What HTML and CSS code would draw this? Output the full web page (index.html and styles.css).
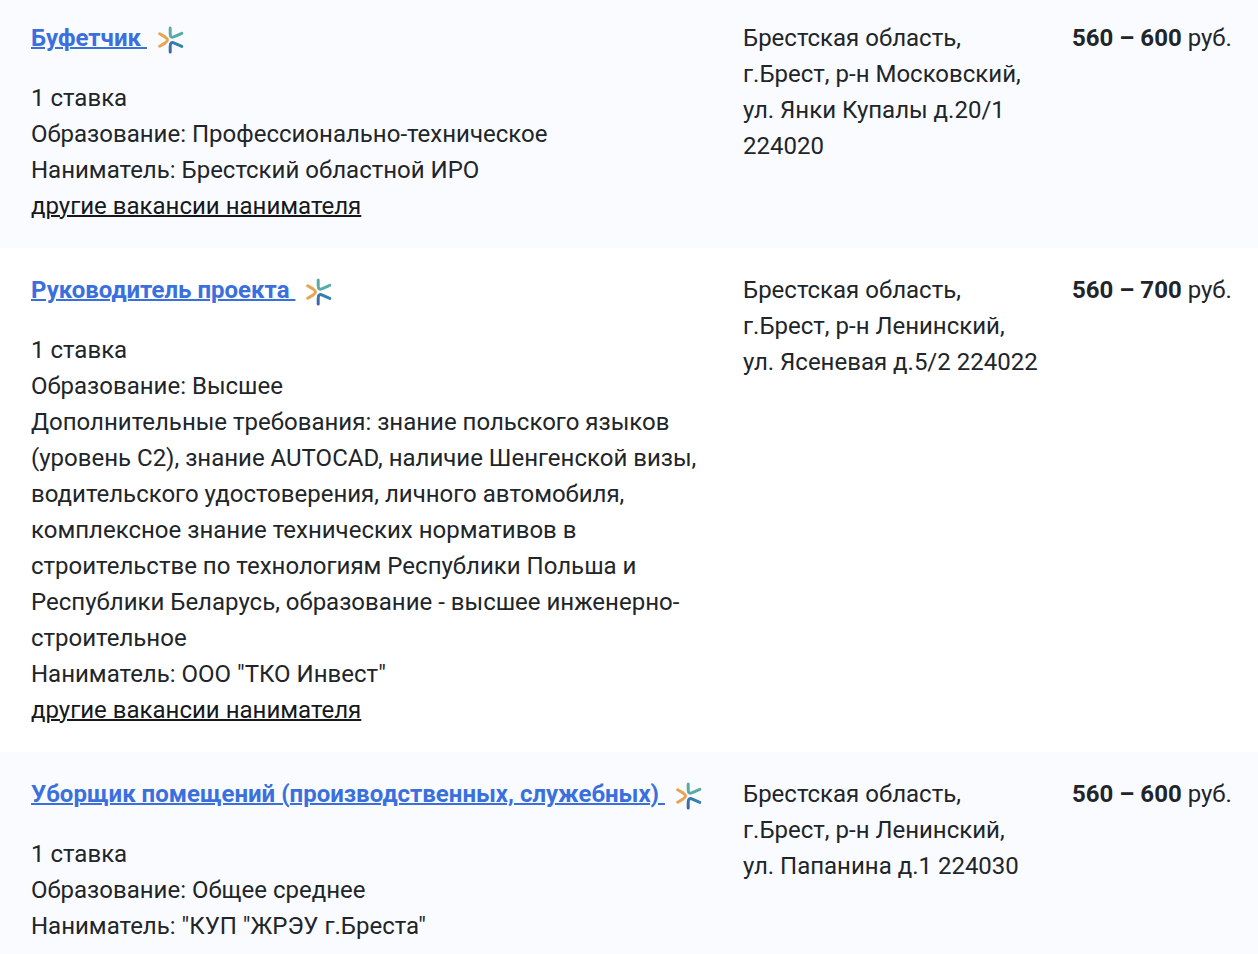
FILE: index.html
```html
<!DOCTYPE html>
<html lang="ru">
<head>
  <meta charset="UTF-8">
  <title>Вакансии</title>
  <link rel="stylesheet" href="styles.css">
</head>
<body>
  <!-- общий значок для всех вакансий -->
  <svg class="sprite" aria-hidden="true">
    <defs>
      <linearGradient id="blue" x1="0" y1="1" x2="1" y2="0">
        <stop offset="0" stop-color="#3f62ad"></stop>
        <stop offset="1" stop-color="#2f8ab2"></stop>
      </linearGradient>
      <symbol id="spark" viewBox="0 0 26 28">
        <path d="M1.7 7.8L7 10.9Q12 14 7 17.1L1.7 20.2" stroke="#e9a452"></path>
        <path d="M12.2 1.9V7.4Q12.2 13 17 10.3L23.8 7.4" stroke="#5aaba6"></path>
        <path d="M12.2 26.1V20.4Q12.2 14.8 17 17.5L23.8 20.4" stroke="url(#blue)"></path>
      </symbol>
    </defs>
  </svg>

  <table class="vacancies">
    <tbody>
      <tr>
        <td class="job">
          <div class="title"><a href="#">Буфетчик&nbsp;</a><svg class="icon"><use href="#spark"></use></svg></div>
          <div>1 ставка</div>
          <div>Образование: Профессионально-техническое</div>
          <div>Наниматель: Брестский областной ИРО</div>
          <a class="more" href="#">другие вакансии нанимателя</a>
        </td>
        <td class="address">Брестская область, г.Брест, р-н Московский, ул. Янки Купалы д.20/1 224020</td>
        <td class="salary"><b>560 – 600</b> руб.</td>
      </tr>
      <tr>
        <td class="job">
          <div class="title"><a href="#">Руководитель проекта&nbsp;</a><svg class="icon"><use href="#spark"></use></svg></div>
          <div>1 ставка</div>
          <div>Образование: Высшее</div>
          <div>Дополнительные требования: знание польского языков (уровень С2), знание AUTOCAD, наличие Шенгенской визы, водительского удостоверения, личного автомобиля, комплексное знание технических нормативов в строительстве по технологиям Республики Польша и Республики Беларусь, образование - высшее инженерно-строительное</div>
          <div>Наниматель: ООО "ТКО Инвест"</div>
          <a class="more" href="#">другие вакансии нанимателя</a>
        </td>
        <td class="address">Брестская область, г.Брест, р-н Ленинский, ул. Ясеневая д.5/2 224022</td>
        <td class="salary"><b>560 – 700</b> руб.</td>
      </tr>
      <tr>
        <td class="job">
          <div class="title"><a href="#">Уборщик помещений (производственных, служебных)&nbsp;</a><svg class="icon"><use href="#spark"></use></svg></div>
          <div>1 ставка</div>
          <div>Образование: Общее среднее</div>
          <div>Наниматель: "КУП "ЖРЭУ г.Бреста"</div>
        </td>
        <td class="address">Брестская область, г.Брест, р-н Ленинский, ул. Папанина д.1 224030</td>
        <td class="salary"><b>560 – 600</b> руб.</td>
      </tr>
    </tbody>
  </table>
</body>
</html>
```

FILE: styles.css
```css
body {
  margin: 0;
  background-color: #fff;
  color: #212529;
  font-family: Roboto, Arial, sans-serif;
  font-size: 24px;
  line-height: 36px;
}

.sprite {
  position: absolute;
  width: 0;
  height: 0;
}

.vacancies {
  width: 100%;
  border-collapse: collapse;
  table-layout: fixed;
}

.vacancies tr:nth-child(odd) {
  background-color: #fafbff;
}

.vacancies td {
  padding: 24px 0 24px 31px;
  vertical-align: top;
}

.vacancies tr:first-child td {
  padding-top: 20px;
}

.vacancies tr:last-child td {
  padding-bottom: 10px;
}

.vacancies .job {
  width: 672px;
}

.vacancies .address {
  padding-left: 40px;
  padding-right: 32px;
}

.vacancies .salary {
  width: 186px;
  padding-left: 0;
  white-space: nowrap;
}

.title {
  display: flex;
  align-items: center;
  gap: 11px;
  margin-bottom: 24px;
  white-space: nowrap;
}

.title a {
  color: #3a70dd;
  font-weight: bold;
}

.icon {
  flex: none;
  width: 26px;
  height: 28px;
  margin-top: 4px;
  fill: none;
  stroke-width: 3;
  stroke-linecap: round;
}

.more {
  color: #16181b;
}

a {
  text-decoration: underline;
  text-decoration-thickness: 2px;
}
```
